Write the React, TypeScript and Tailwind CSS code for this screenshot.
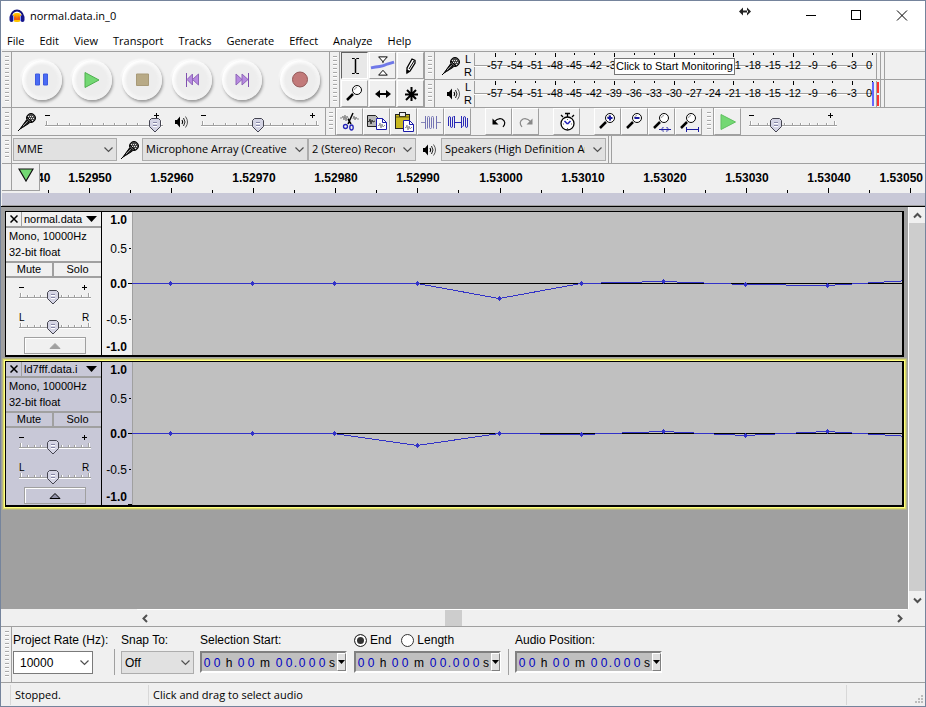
import { useState } from 'react';
import type { ReactNode } from 'react';

const MENUS = ['File', 'Edit', 'View', 'Transport', 'Tracks', 'Generate', 'Effect', 'Analyze', 'Help'];

const METER_DB = [-57, -54, -51, -48, -45, -42, -39, -36, -33, -30, -27, -24, -21, -18, -15, -12, -9, -6, -3, 0];

const TIMES = ['1.52950', '1.52960', '1.52970', '1.52980', '1.52990', '1.53000', '1.53010', '1.53020', '1.53030', '1.53040'];

// [x, y] of each sample inside the wave view, zero level is y = 71
const TRACKS = [
  {
    name: 'normal.data',
    selected: false,
    points: [[0, 71], [38, 71], [120, 71], [202, 71], [285, 71], [367, 86], [449, 71], [531, 69], [613, 72], [695, 73], [777, 68]],
  },
  {
    name: 'ld7fff.data.i',
    selected: true,
    points: [[0, 71], [38, 71], [120, 71], [202, 71], [285, 83], [367, 71], [449, 72], [531, 69], [613, 73], [695, 69], [777, 74]],
  },
];

/* ---------- icons ---------- */

function MicIcon() {
  return (
    <svg width="20" height="20" viewBox="0 0 20 20" className="shrink-0">
      <path d="M1 19 L5 15" stroke="#000" strokeWidth="1" />
      <path d="M3 17 L9.500 8 L12.500 11 L5.500 15.500 Z" fill="#222" stroke="#000" strokeWidth="1" />
      <path d="M6 14 L11 9" stroke="#999" strokeWidth="1" />
      <circle cx="14" cy="6" r="4.500" fill="#4a4a4a" stroke="#000" />
      <path d="M11 4.500h1M13 4.500h1M15 4.500h1M12 6.500h1M14 6.500h1M16 6.500h1M13 8.500h1M15 8.500h1" stroke="#e8e8e8" strokeWidth="1" />
      <path d="M10 5 L15 10" stroke="#000" strokeWidth="1" />
    </svg>
  );
}

function SpeakerIcon() {
  return (
    <svg width="16" height="16" viewBox="0 0 16 16" fill="none" className="shrink-0">
      <path d="M2 6h2l3-3.500v11l-3-3.500h-2z" fill="#000" />
      <path d="M9 6q1.500 2 0 4" stroke="#000" strokeWidth="1.200" />
      <path d="M10.500 4q3 4 0 8" stroke="#222" />
      <path d="M12.500 2.500q4 5.500 0 11" stroke="#555" />
    </svg>
  );
}

function Lens({ children }: { children?: ReactNode }) {
  return (
    <svg width="23" height="22" viewBox="0 0 23 22" fill="none">
      <path d="M4 17 L10 11" stroke="#000" strokeWidth="2.500" />
      <circle cx="14" cy="7" r="4.500" fill="#fff" stroke="#000" />
      <path d="M11.500 7 q0-2.500 2.500-2.500" stroke="#999" />
      {children}
    </svg>
  );
}

function HeadphonesLogo() {
  return (
    <svg width="16" height="16" viewBox="0 0 16 16" fill="none">
      <path d="M2 9 A6 6.500 0 0 1 14 9" stroke="#12127a" strokeWidth="2" />
      <rect x="4" y="5" width="8" height="9" rx="3" fill="#ffc400" />
      <path d="M4 9l1-2 1 3 1-4 1 5 1-5 1 4 1-3 1 2v3H4z" fill="#f05a10" />
      <rect x="0.500" y="7" width="4" height="7" rx="2" fill="#15158c" />
      <rect x="11.500" y="7" width="4" height="7" rx="2" fill="#15158c" />
      <path d="M4.500 8v5M11.500 8v5" stroke="#8fa0ff" />
    </svg>
  );
}

const selectIcon = (
  <svg width="22" height="22" viewBox="0 0 22 22" fill="none" stroke="#000">
    <path d="M11.500 4v14" strokeWidth="1.500" />
    <path d="M8 3.500h2.500l1 1 1-1H15M8 18.500h2.500l1-1 1 1H15" />
  </svg>
);

const envelopeIcon = (
  <svg width="26" height="24" viewBox="0 0 26 24" fill="none">
    <path d="M1 14q5-1 9-1.500t8-2.500l7-2" stroke="#6f78e8" strokeWidth="3" />
    <path d="M9 2.500h9l-4.500 5z" fill="#fff" stroke="#000" />
    <path d="M13.500 7v2" stroke="#000" />
    <path d="M9 21.500h9l-4.500-5z" fill="#fff" stroke="#000" />
  </svg>
);

const pencilIcon = (
  <svg width="20" height="20" viewBox="0 0 20 20" fill="none">
    <path d="M6 17 L6 12 L11 3 L14 4.500 L14 7 L9 15 Z" fill="#fff" stroke="#000" strokeWidth="1.300" />
    <path d="M8 13 L13 5" stroke="#000" />
    <path d="M6 17l0-3 2 1z" fill="#000" stroke="#000" />
  </svg>
);

const shiftIcon = (
  <svg width="20" height="14" viewBox="0 0 20 14">
    <path d="M5 7h10" stroke="#000" strokeWidth="2" />
    <path d="M2 7l5-4v8zM18 7l-5-4v8z" />
  </svg>
);

const multiIcon = (
  <svg width="18" height="18" viewBox="0 0 18 18" fill="none" stroke="#000" strokeWidth="2">
    <path d="M9.500 2v14M3 9.500h13M5 5l9 9M14 5l-10 10" />
  </svg>
);

const cutIcon = (
  <svg width="22" height="22" viewBox="0 0 22 22" fill="none">
    <path d="M1 7h2l1-2 1 4 1-5 1 6 1-5 2 4M14 8l1-3 1 4 1-3 1 2h2" stroke="#888" />
    <path d="M14 2 L9 13M9 8 L12 13" stroke="#000" strokeWidth="1.500" />
    <circle cx="6.500" cy="15.500" r="2" stroke="#2222b8" strokeWidth="1.300" />
    <ellipse cx="12.500" cy="16.500" rx="1.700" ry="2.500" stroke="#2222b8" strokeWidth="1.300" />
  </svg>
);

const copyIcon = (
  <svg width="24" height="22" viewBox="0 0 24 22" fill="none">
    <path d="M2.500 4.500h8l2 2v9h-10z" fill="#b8b8b8" stroke="#222" />
    <path d="M3 10l1 1 1-3 1 5 1-4 1 2 2-1" stroke="#333" />
    <path d="M11.500 7.500h6l4 4v7h-10z" fill="#fff" stroke="#1a1aa8" />
    <path d="M17.500 7.500v4h4" stroke="#1a1aa8" />
    <path d="M13 14l1 1 1-3 1 5 1-4 1 3 2-2" stroke="#999" />
  </svg>
);

const pasteIcon = (
  <svg width="24" height="24" viewBox="0 0 24 24" fill="none">
    <rect x="3.500" y="4.500" width="14" height="14" fill="#c8b820" stroke="#222" />
    <rect x="7.500" y="2.500" width="6" height="4" fill="#ececec" stroke="#222" />
    <path d="M4 7h13" stroke="#665c10" />
    <path d="M11.500 10.500h6l4 4v7h-10z" fill="#fff" stroke="#1a1aa8" />
    <path d="M17.500 10.500v4h4" stroke="#1a1aa8" />
    <path d="M13 17l1 1 1-3 1 5 1-4 1 3 2-2" stroke="#999" />
  </svg>
);

const trimIcon = (
  <svg width="22" height="18" viewBox="0 0 22 18" fill="none">
    <path d="M1 9.500h5M16 9.500h5" stroke="#8888b8" />
    <path d="M5.500 3v13M5.500 3.500M7.500 15.500V4.500q0-1 1-1t1 1v10q0 1 1 1t1-1v-10q0-1 1-1t1 1v11" stroke="#7474b4" />
    <path d="M16.500 3v13" stroke="#7474b4" />
  </svg>
);

const silenceIcon = (
  <svg width="22" height="18" viewBox="0 0 22 18" fill="none" stroke="#2a2ab8">
    <path d="M1.500 13V5q0-1.500 1-1.500t1 1.500v8q0 1.500 1 1.500t1-1.500V5q0-1.500 1-1.500" />
    <path d="M7.500 3v12M8 9.500h6M14.500 3v12" />
    <path d="M15.500 13.500q1 0 1-1.500V5q0-1.500 1-1.500t1 1.500v8q0 1.500 1 1.500t1-1.500V5" />
  </svg>
);

const undoIcon = (
  <svg width="20" height="18" viewBox="0 0 20 18" fill="none">
    <path d="M5 9q4-4.500 8-3 5 3 1 8" stroke="#000" strokeWidth="1.200" />
    <path d="M3.500 5.500v6h6z" fill="#000" />
  </svg>
);

const redoIcon = (
  <svg width="20" height="18" viewBox="0 0 20 18" fill="none">
    <path d="M15 9q-4-4.500-8-3-5 3-1 8" stroke="#888" strokeWidth="1.200" />
    <path d="M16.500 5.500v6h-6z" fill="#888" />
  </svg>
);

const timerIcon = (
  <svg width="20" height="22" viewBox="0 0 20 22" fill="none">
    <path d="M8 2.500h5M10.500 3v3M15 6l2-2M6 6L4 4" stroke="#000" strokeWidth="1.300" />
    <circle cx="10.500" cy="12.500" r="6.500" fill="#fff" stroke="#000" strokeWidth="1.300" />
    <path d="M10.500 8v1M10.500 17v1M6 13h1M14 13h1" stroke="#666" />
    <path d="M10.500 13L7.500 10M10.500 13l3-3" stroke="#2222b8" strokeWidth="1.500" />
  </svg>
);

const playSmallIcon = (
  <svg width="18" height="18" viewBox="0 0 18 18">
    <path d="M2 1.500v15l14.500-7.500z" fill="#73d873" stroke="#60c060" />
  </svg>
);

const zoomInMark = <path d="M11.500 7h5M14 4.500v5" stroke="#1a1aa0" strokeWidth="2" />;
const zoomOutMark = <path d="M11.500 7h5" stroke="#1a1aa0" strokeWidth="2" />;
const fitSelectionMark = (
  <>
    <path d="M9 18.500h12" stroke="#1a1aa0" />
    <path d="M10.500 18.500l3-2.500v5zM14.500 18.500l-2-2.500v5zM15.500 18.500l2-2.500v5zM19.500 18.500l-3-2.500v5z" fill="#1a1aa0" />
  </>
);
const fitProjectMark = <path d="M9.500 16v5M21.500 16v5M10 18.500h11" stroke="#1a1aa0" />;

/* ---------- small parts ---------- */

function Grip() {
  return (
    <div className="flex w-[10px] shrink-0 justify-center border-r border-[#a0a0a0] py-1">
      <div className="w-1 bg-[repeating-linear-gradient(#a8a8a8_0_1px,#fff_1px_2px,#f0f0f0_2px_4px)]" />
    </div>
  );
}

function ToolButton({ label, pressed, children }: { label: string; pressed?: boolean; children: ReactNode }) {
  return (
    <button
      type="button"
      aria-label={label}
      className={`flex size-[27px] shrink-0 items-center justify-center overflow-hidden border ${
        pressed ? 'border-t-[#606060] border-r-white border-b-white border-l-[#606060] bg-[#e8e8e8]' : 'border-t-white border-r-[#a0a0a0] border-b-[#a0a0a0] border-l-white'
      }`}
    >
      {children}
    </button>
  );
}

function TransportButton({ label, className = '', children }: { label: string; className?: string; children: ReactNode }) {
  return (
    <button type="button" aria-label={label} className={`flex h-[54px] w-[50px] shrink-0 items-center justify-center ${className}`}>
      <span className="flex size-[40px] items-center justify-center rounded-full bg-[linear-gradient(135deg,#fff_20%,#f6f6f6_60%,#ececec)] shadow-[1px_2px_3px_#989898,-1px_-1px_2px_#fff]">
        <span className="flex size-[30px] items-center justify-center rounded-full bg-[#ededed] shadow-[0_0_3px_2px_#ededed]">
          <svg width="18" height="18" viewBox="0 0 18 18">{children}</svg>
        </span>
      </span>
    </button>
  );
}

type SliderProps = { label: string; width: number; ticks?: number; initial: number; left?: string; right?: string };

function Slider({ label, width, ticks = 10, initial, left, right }: SliderProps) {
  const [value, setValue] = useState(initial);
  const thumb = 7 + ((width - 14) * value) / 100;
  return (
    <div className="relative h-[22px] shrink-0" style={{ width }}>
      <svg width={width} height="22" fill="none" className="block overflow-visible" shapeRendering="crispEdges">
        {left ? (
          <text x="0" y="8" fill="#000" className="text-[10px]">{left}</text>
        ) : (
          <path d="M0 4.500h5" stroke="#000" />
        )}
        {right ? (
          <text x={width - 9} y="8" fill="#000" className="text-[10px]">{right}</text>
        ) : (
          <path d={`M${width - 9} 4.500h5M${width - 6.5} 2v5`} stroke="#000" />
        )}
        {Array.from({ length: ticks + 1 }, (_, i) => {
          const x = Math.round(1 + (i * (width - 4)) / ticks) + 0.5;
          const top = i === 0 || i === ticks ? 10 : 12;
          return (
            <g key={i}>
              <path d={`M${x} ${top}V14`} stroke="#a0a0a0" />
              <path d={`M${x + 1} ${top}V14`} stroke="#fff" />
            </g>
          );
        })}
        <path d={`M0 14.500H${width}`} stroke="#a0a0a0" />
        <path d={`M0 15.500H${width}`} stroke="#fff" />
        <g transform={`translate(${Math.round(thumb) - 6} 7)`} shapeRendering="auto">
          <path d="M2.500 0.500h7l2 2v6l-5.500 5.500l-5.500-5.500v-6z" fill="#d4d4e4" stroke="#444450" />
          <path d="M4 4.500h4M4 7.500h4" stroke="#8888a8" />
          <path d="M4 5.500h4M4 8.500h4" stroke="#fff" />
        </g>
      </svg>
      <input
        type="range"
        aria-label={label}
        value={value}
        onChange={(e) => setValue(Number(e.target.value))}
        className="absolute inset-0 m-0 h-full w-full opacity-0"
      />
    </div>
  );
}

function Chevron() {
  return (
    <svg width="9" height="6" viewBox="0 0 9 6" fill="none" className="pointer-events-none absolute top-[9px] right-1">
      <path d="M0.500 0.500l4 4 4-4" stroke="#505050" strokeWidth="1.200" />
    </svg>
  );
}

function Dropdown({ label, value, className, textClass = "text-[11px] font-['Open_Sans',sans-serif]" }: { label: string; value: string; className: string; textClass?: string }) {
  return (
    <div className={`relative shrink-0 ${className}`}>
      <select
        aria-label={label}
        className={`block h-[23px] w-full appearance-none overflow-hidden border border-[#adadad] bg-[#e1e1e1] pr-5 pl-[3px] whitespace-nowrap ${textClass}`}
      >
        <option>{value}</option>
      </select>
      <Chevron />
    </div>
  );
}

function MeterScale({ active }: { active?: boolean }) {
  return (
    <svg width="410" height="27" className="shrink-0" shapeRendering="crispEdges">
      <path d="M0.500 1V27" stroke="#a0a0a0" />
      <path d="M0 13.500H399" stroke="#a0a0a0" />
      <path d="M0 14.500H399" stroke="#fff" />
      {METER_DB.map((db, i) => {
        const x = Math.round(21 + i * 19.85);
        return (
          <g key={db}>
            <path d={`M${x}.5 ${i % 3 === 0 ? '1V5' : '1V3'}`} stroke="#000" />
            <text x={db === 0 ? x - 3 : x} y="17" textAnchor="middle" className="text-[11px]">
              {db}
            </text>
          </g>
        );
      })}
      <path d="M402.500 1V27M406.500 0V27" stroke="#a0a0a0" />
      {active && (
        <>
          <path d="M398 2h2v24h-2z" fill="#6666ff" />
          <path d="M403 2h2v11h-2zM403 15h2v11h-2z" fill="#ff3030" />
        </>
      )}
    </svg>
  );
}

function Meter({ label, icon, active }: { label: string; icon: ReactNode; active?: boolean }) {
  return (
    <div className={`flex h-[28px] ${active ? 'border-t border-[#a0a0a0]' : ''}`}>
      <Grip />
      <button type="button" aria-label={label} className="flex w-[27px] shrink-0 items-center justify-end pr-[1px]">
        {icon}
      </button>
      <div className="flex w-[12px] shrink-0 flex-col items-center justify-center text-[11px] leading-[13px]">
        <span>L</span>
        <span>R</span>
      </div>
      <MeterScale active={active} />
      <div className="flex-1 border-l border-[#a0a0a0]" />
    </div>
  );
}

function TimeField({ label }: { label: string }) {
  const cells = ['0', '0', 'h', '0', '0', 'm', '0', '0', '.', '0', '0', '0', 's'];
  return (
    <div role="group" aria-label={label} className="flex h-[22px] w-[147px] items-stretch border-2 border-t-[#808080] border-r-white border-b-white border-l-[#808080] bg-[#c0c0c0]">
      <div className="flex flex-1 items-center pt-[1px] text-[12px]">
        {cells.map((c, i) => {
          let cell = 'w-[10px] text-[#0000c0]';
          if (c === 'h') cell = 'w-[14px]';
          if (c === 'm') cell = 'w-[18px]';
          if (c === '.') cell = 'w-[3px] text-[#0000c0]';
          if (c === 's') cell = 'w-[10px]';
          return (
            <span key={i} className={`flex justify-center ${cell}`}>{c}</span>
          );
        })}
      </div>
      <button type="button" aria-label={`${label} format`} className="flex w-[9px] shrink-0 items-center justify-center border border-white border-r-[#808080] border-b-[#808080] bg-[#e0e0e0]">
        <svg width="7" height="4" viewBox="0 0 7 4" className="shrink-0"><path d="M0 0h7l-3.500 4z" /></svg>
      </button>
    </div>
  );
}

function ScrollArrow({ label, d, className }: { label: string; d: string; className: string }) {
  return (
    <button type="button" aria-label={label} className={`flex shrink-0 items-center justify-center ${className}`}>
      <svg width="9" height="9" viewBox="0 0 9 9" fill="none">
        <path d={d} stroke="#505050" strokeWidth="2" />
      </svg>
    </button>
  );
}

function Track({ name, selected, points }: { name: string; selected: boolean; points: number[][] }) {
  const line = points.map(([x, y]) => `${x},${y + 0.5}`).join(' ');
  return (
    <section
      aria-label={name}
      className={`flex border border-r-2 border-b-2 border-black text-[11px] ${
        selected ? 'bg-[#c8c8d7] shadow-[0_0_0_1px_#ffff80,0_0_0_2px_#d8d868,0_0_0_3px_#b4b488]' : 'bg-[#f0f0f0]'
      }`}
    >
      <div className="flex w-[96px] shrink-0 flex-col border-r border-black">
        <div className="flex h-4 border-b-2 border-[#a0a0a0]">
          <button type="button" aria-label={`Close ${name}`} className="flex w-4 items-center justify-end border-r border-[#a0a0a0] pr-[3px]">
            <svg width="8" height="8" viewBox="0 0 8 8" stroke="#000" strokeWidth="1.500"><path d="M0.500 0.500l7 7M7.500 0.500l-7 7" /></svg>
          </button>
          <button type="button" className="flex flex-1 items-center justify-between pr-1 pl-[2px] leading-[14px]">
            {name}
            <svg width="11" height="6" viewBox="0 0 11 6"><path d="M0 0h11l-5.500 6z" /></svg>
          </button>
        </div>
        <div className="pl-[3px] leading-4">
          <p>Mono, 10000Hz</p>
          <p>32-bit float</p>
        </div>
        <div className="mt-[1px] flex h-[17px] border-t-2 border-b-2 border-[#a0a0a0] leading-[13px]">
          <button type="button" className="w-[48px] border-r-2 border-[#a0a0a0]">Mute</button>
          <button type="button" className="flex-1">Solo</button>
        </div>
        <div className="flex flex-col gap-2 pt-[5px] pl-[13px]">
          <Slider label={`${name} gain`} width={72} initial={47} />
          <Slider label={`${name} pan`} width={72} initial={47} left="L" right="R" />
        </div>
        <button
          type="button"
          aria-label="Collapse"
          className="mt-[2px] ml-[18px] flex h-[17px] w-[62px] items-center justify-center border border-[#a0a0a0] shadow-[inset_1px_1px_0_#fff]"
        >
          <svg width="12" height="6" viewBox="0 0 12 6">
            <path d="M1 5.500h10l-5-5z" fill={selected ? '#9090a8' : '#a0a0a0'} stroke={selected ? '#000' : '#a0a0a0'} />
          </svg>
        </button>
      </div>
      <svg width="30" height="143" className="shrink-0" shapeRendering="crispEdges">
        <g textAnchor="end" className="text-[12px]">
          <text x="25" y="12" className="font-bold">1.0</text>
          <text x="25" y="41">0.5</text>
          <text x="25" y="76" className="font-bold">0.0</text>
          <text x="25" y="112">-0.5</text>
          <text x="25" y="139" className="font-bold">-1.0</text>
        </g>
        <path d="M27 36.500h2M26 71.500h4M27 107.500h2" stroke="#000" />
        {selected && <path d="M26 142.500h4" stroke="#000" />}
      </svg>
      <svg height="143" className="min-w-0 flex-1 bg-[#c0c0c0]" shapeRendering="crispEdges">
        <path d="M0.500 0V143" stroke="#a0a0a0" />
        <line x1="0" x2="100%" y1="71.500" y2="71.500" stroke="#000" />
        <polyline points={line} fill="none" stroke="#3232c8" />
        {points.slice(1).map(([x, y]) => (
          <path key={x} d={`M${x - 1} ${y - 1}h3v3h-3zM${x} ${y - 2}h1v5h-1zM${x - 2} ${y}h5v1h-5z`} fill="#3232c8" />
        ))}
      </svg>
    </section>
  );
}

/* ---------- window ---------- */

export default function App() {
  const [selectionMode, setSelectionMode] = useState('end');
  const [rate, setRate] = useState('10000');

  return (
    <div className="relative flex min-h-screen flex-col border border-[#75849c] bg-[#f0f0f0] font-['Liberation_Sans',Arial,sans-serif] text-[12px] text-black">
      <header className="bg-white font-['Open_Sans',sans-serif]">
        <div className="flex h-[30px] items-center pl-2">
          <HeadphonesLogo />
          <h1 className="ml-[5px] flex-1 text-[11px]">normal.data.in_0</h1>
          <div className="flex items-center gap-8 pr-[17px]">
            <button type="button" aria-label="Minimize">
              <svg width="13" height="12" viewBox="0 0 13 12"><path d="M1 5.500h10" stroke="#000" /></svg>
            </button>
            <button type="button" aria-label="Maximize">
              <svg width="13" height="12" viewBox="0 0 13 12" fill="none"><rect x="1.500" y="0.500" width="9" height="9" stroke="#000" /></svg>
            </button>
            <button type="button" aria-label="Close">
              <svg width="13" height="12" viewBox="0 0 13 12"><path d="M2 0.500l10 10M12 0.500l-10 10" stroke="#000" /></svg>
            </button>
          </div>
        </div>
        <nav className="flex h-[18px] items-center gap-[15px] pt-[2px] pl-[6px] text-[11px]">
          {MENUS.map((menu) => (
            <button key={menu} type="button" className="leading-4">{menu}</button>
          ))}
        </nav>
      </header>

      <div className="mt-0.5 pl-[1px]">
        <div className="flex h-[56px] border-t border-[#a0a0a0]">
          <Grip />
          <div className="flex items-center border-r border-[#a0a0a0] pr-1 pl-[5px]">
            <TransportButton label="Pause">
              <path d="M2.500 3h4v11h-4zM10.500 3h4v11h-4z" fill="#4a6cf4" stroke="#3f5ae0" />
            </TransportButton>
            <TransportButton label="Play">
              <path d="M2 1.500v15l14-7.500z" fill="#73d873" stroke="#4fb04f" />
            </TransportButton>
            <TransportButton label="Stop">
              <path d="M3.500 3h12v11.500h-12z" fill="#b8aa86" stroke="#a89a78" />
            </TransportButton>
            <TransportButton label="Skip to Start">
              <path d="M3.500 2v14" stroke="#8050b0" />
              <path d="M9.500 3v11l-5.500-5.500zM15.500 3v11l-6-5.500z" fill="#b78ae0" stroke="#8f66b8" />
            </TransportButton>
            <TransportButton label="Skip to End">
              <path d="M15.500 2v14" stroke="#8050b0" />
              <path d="M3 3v11l6-5.500zM9 3v11l6-5.500z" fill="#b78ae0" stroke="#8f66b8" />
            </TransportButton>
            <TransportButton label="Record" className="ml-2">
              <circle cx="9" cy="8.500" r="7.500" fill="#c27a7a" stroke="#945858" />
            </TransportButton>
          </div>
          <Grip />
          <div className="grid shrink-0 grid-cols-3 content-start gap-[1px] border-r border-[#a0a0a0] pl-[1px]">
            <ToolButton label="Selection Tool" pressed>{selectIcon}</ToolButton>
            <ToolButton label="Envelope Tool">{envelopeIcon}</ToolButton>
            <ToolButton label="Draw Tool">{pencilIcon}</ToolButton>
            <ToolButton label="Zoom Tool"><Lens /></ToolButton>
            <ToolButton label="Time Shift Tool">{shiftIcon}</ToolButton>
            <ToolButton label="Multi-Tool">{multiIcon}</ToolButton>
          </div>
          <div className="relative flex min-w-0 flex-1 flex-col overflow-hidden">
            <Meter label="Record Meter" icon={<MicIcon />} />
            <Meter label="Playback Meter" icon={<SpeakerIcon />} active />
            <div role="tooltip" className="absolute top-[6px] left-[189px] h-[17px] border border-[#767676] bg-white px-[1px] text-[11px] leading-[15px] whitespace-nowrap">
              Click to Start Monitoring
            </div>
          </div>
        </div>

        <div className="flex h-[28px] border-t border-[#a0a0a0]">
          <Grip />
          <div className="flex w-[314px] shrink-0 items-center gap-2 border-r border-[#a0a0a0] pl-[5px]">
            <MicIcon />
            <Slider label="Recording Volume" width={118} initial={99} />
            <span className="flex w-[22px] justify-end pr-1"><SpeakerIcon /></span>
            <Slider label="Playback Volume" width={118} initial={48} />
          </div>
          <Grip />
          <div className="flex flex-1">
            <ToolButton label="Cut">{cutIcon}</ToolButton>
            <ToolButton label="Copy">{copyIcon}</ToolButton>
            <ToolButton label="Paste">{pasteIcon}</ToolButton>
            <ToolButton label="Trim">{trimIcon}</ToolButton>
            <ToolButton label="Silence">{silenceIcon}</ToolButton>
            <span className="w-[14px]" />
            <ToolButton label="Undo">{undoIcon}</ToolButton>
            <ToolButton label="Redo">{redoIcon}</ToolButton>
            <span className="w-[14px]" />
            <ToolButton label="Sync-Lock">{timerIcon}</ToolButton>
            <span className="w-[14px]" />
            <ToolButton label="Zoom In"><Lens>{zoomInMark}</Lens></ToolButton>
            <ToolButton label="Zoom Out"><Lens>{zoomOutMark}</Lens></ToolButton>
            <ToolButton label="Fit Selection"><Lens>{fitSelectionMark}</Lens></ToolButton>
            <ToolButton label="Fit Project"><Lens>{fitProjectMark}</Lens></ToolButton>
            <span className="flex pl-[2px]"><Grip /></span>
            <ToolButton label="Play at Speed">{playSmallIcon}</ToolButton>
            <span className="ml-2 flex items-center">
              <Slider label="Playback Speed" width={88} initial={27} />
            </span>
          </div>
        </div>

        <div className="flex h-[28px] border-t border-[#a0a0a0]">
          <Grip />
          <div className="flex items-center pl-[1px]">
            <Dropdown label="Audio Host" value="MME" className="w-[104px]" />
            <span className="mr-[2px] ml-[3px]"><MicIcon /></span>
            <Dropdown label="Recording Device" value="Microphone Array (Creative Live!)" className="w-[166px]" />
            <Dropdown label="Recording Channels" value="2 (Stereo) Recording" className="w-[108px]" />
            <span className="mr-1 ml-[5px]"><SpeakerIcon /></span>
            <Dropdown label="Playback Device" value="Speakers (High Definition Audio)" className="w-[165px]" />
          </div>
          <div className="ml-[2px] w-1 border-r border-l border-[#a0a0a0]" />
        </div>

        <div className="flex h-[43px] flex-col border-t border-[#a0a0a0]">
          <div className="flex flex-1">
            <div className="h-[27px] w-[10px] shrink-0 border-r border-b border-[#a0a0a0]" />
            <button type="button" aria-label="Pin Play Head" className="flex h-[27px] w-[28px] shrink-0 items-start justify-center border-r border-b border-[#a0a0a0] pt-1">
              <svg width="16" height="14" viewBox="0 0 16 14"><path d="M1 1h14l-7 12z" fill="#73d873" stroke="#111" strokeWidth="1.200" /></svg>
            </button>
            <svg height="29" className="mr-[2px] min-w-0 flex-1" shapeRendering="crispEdges">
              <text x="-3" y="18" className="text-[12px] font-bold">40</text>
              <path d="M8.500 26v3" stroke="#000" />
              {TIMES.map((t, i) => {
                const x = Math.round(49 + i * 82.1);
                return (
                  <g key={t}>
                    <text x={x + 1} y="18" textAnchor="middle" className="text-[12px] font-bold">{t}</text>
                    <path d={`M${x}.5 24v5M${x + 41}.5 26v3`} stroke="#000" />
                  </g>
                );
              })}
              <path d="M870.500 24v5" stroke="#000" />
              <text x="100%" y="18" textAnchor="end" className="text-[12px] font-bold">1.53050</text>
            </svg>
          </div>
          <div className="h-[13px] border-b border-[#a0a0a0] bg-[#c8c8d7]" />
        </div>
      </div>

      <main className="flex min-h-[402px] flex-1 border-t border-black">
        <div className="flex min-w-0 flex-1 flex-col gap-1 bg-[#a0a0a0] p-1">
          {TRACKS.map((track) => (
            <Track key={track.name} {...track} />
          ))}
        </div>
        <div className="flex w-[17px] flex-col border-l border-white">
          <ScrollArrow label="Scroll up" d="M1 6.500l3.500-3.500 3.500 3.500" className="h-4" />
          <div className="flex-1 bg-[#cdcdcd]" />
          <ScrollArrow label="Scroll down" d="M1 2.500l3.500 3.500 3.500-3.500" className="h-[18px]" />
        </div>
      </main>

      <div className="flex h-[17px] pr-[18px] pl-[136px]">
        <div className="flex flex-1 border-t border-white">
          <ScrollArrow label="Scroll left" d="M6 1l-3.500 3.500 3.500 3.500" className="w-4" />
          <div className="flex-1 pl-[292px]">
            <div className="h-4 w-[17px] bg-[#cdcdcd]" />
          </div>
          <ScrollArrow label="Scroll right" d="M3 1l3.500 3.500-3.500 3.500" className="w-4" />
        </div>
      </div>

      <div className="flex h-[56px] border-t border-[#a0a0a0] pl-[1px]">
        <Grip />
        <div className="flex items-start pt-[6px] pl-[1px]">
          <div className="flex w-[101px] flex-col gap-[3px]">
            <label htmlFor="rate" className="leading-[15px] whitespace-nowrap">Project Rate (Hz):</label>
            <div className="relative w-[80px]">
              <input
                id="rate"
                value={rate}
                onChange={(e) => setRate(e.target.value)}
                className="block h-[23px] w-full border border-[#7a7a7a] bg-white pr-5 pl-[6px] text-[12px]"
              />
              <Chevron />
            </div>
          </div>
          <div className="mt-4 h-[26px] w-[1px] bg-[#a0a0a0]" />
          <div className="ml-[6px] flex flex-col gap-[3px]">
            <span className="leading-[15px]">Snap To:</span>
            <Dropdown label="Snap To" value="Off" className="w-[73px]" textClass="text-[12px] font-['Liberation_Sans',Arial,sans-serif]" />
          </div>
          <div className="ml-[6px] flex flex-col gap-[3px]">
            <span className="leading-[15px]">Selection Start:</span>
            <TimeField label="Selection Start" />
          </div>
          <div className="ml-[7px] flex flex-col gap-[3px]">
            <div className="flex gap-[10px] leading-[15px]">
              {['End', 'Length'].map((mode) => (
                <label key={mode} className="flex items-center gap-[3px]">
                  <input
                    type="radio"
                    name="selection-mode"
                    checked={selectionMode === mode.toLowerCase()}
                    onChange={() => setSelectionMode(mode.toLowerCase())}
                    className="size-[13px] appearance-none rounded-full border border-[#333] bg-white checked:bg-[#333] checked:shadow-[inset_0_0_0_2px_#fff]"
                  />
                  {mode}
                </label>
              ))}
            </div>
            <TimeField label="Selection End" />
          </div>
          <div className="mt-4 ml-[7px] h-[26px] w-[1px] bg-[#a0a0a0]" />
          <div className="ml-[6px] flex flex-col gap-[3px]">
            <span className="leading-[15px]">Audio Position:</span>
            <TimeField label="Audio Position" />
          </div>
        </div>
      </div>

      <footer className="flex h-[24px] items-center border-t border-[#a0a0a0] font-['Open_Sans',sans-serif] text-[11px]">
        <div className="ml-[9px] flex h-5 w-[138px] items-center border-l border-[#d8d8d8] pt-[2px] pl-1">Stopped.</div>
        <div className="flex h-5 flex-1 items-center border-l border-[#d8d8d8] pt-[2px] pl-1">Click and drag to select audio</div>
        <div className="flex h-5 w-[79px] items-end justify-end border-l border-[#d8d8d8]">
          <svg width="11" height="11" viewBox="0 0 11 11" fill="#bcbcbc" shapeRendering="crispEdges">
            <path d="M7 1h2v2h-2zM4 4h2v2h-2zM7 4h2v2h-2zM1 7h2v2h-2zM4 7h2v2h-2zM7 7h2v2h-2z" />
          </svg>
        </div>
      </footer>

      {/* resize pointer hovering the title bar */}
      <svg width="12" height="9" viewBox="0 0 12 9" className="absolute top-[6px] right-[174px]">
        <path d="M0 4.500l4-4v8zM12 4.500l-4-4v8zM3 3.500h6v2h-6z" fill="#222" />
      </svg>
    </div>
  );
}
